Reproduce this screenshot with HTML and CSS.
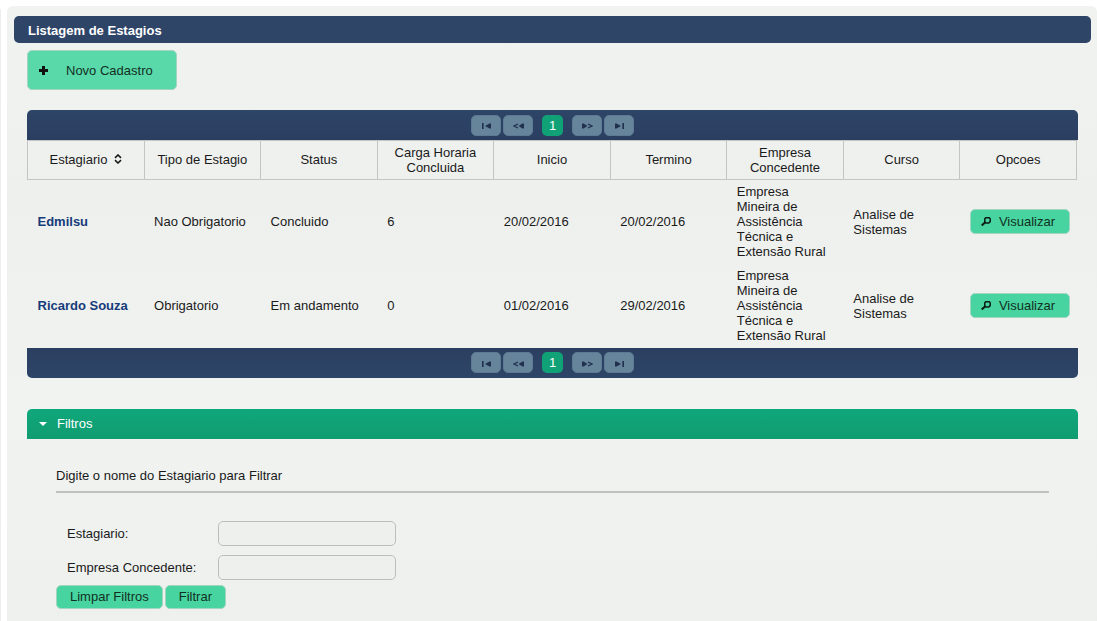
FILE: index.html
```
<!DOCTYPE html>
<html lang="pt-BR">
<head>
<meta charset="utf-8">
<title>Listagem de Estagios</title>
<link rel="stylesheet" href="styles.css">
</head>
<body>
<svg class="sprite" aria-hidden="true">
  <symbol id="i-first" viewBox="0 0 9 6"><path d="M0 0h1.600v6H0zM9 .5v5H7.500L3 3 7.500.5z"/></symbol>
  <symbol id="i-prev" viewBox="0 0 11 6"><path d="M11 .5v5H9.500L5.500 3l4-2.500z"/><path d="M5 1 1 3l4 2" fill="none" stroke="currentColor" stroke-width="1.300"/></symbol>
  <symbol id="i-next" viewBox="0 0 11 6"><path d="M0 .5v5h1.500l4-2.500-4-2.500z"/><path d="M6 1 10 3 6 5" fill="none" stroke="currentColor" stroke-width="1.300"/></symbol>
  <symbol id="i-last" viewBox="0 0 9 6"><path d="M7.400 0H9v6H7.400zM0 .5v5h1.500L6 3 1.500.5z"/></symbol>
  <symbol id="i-search" viewBox="0 0 10 9"><path d="M4.700.8h3.500l1 1v2.800L7.800 6H5L3.800 4.800V1.800z" fill="none" stroke="currentColor" stroke-width="1.500"/><path d="M4.300 5.300.7 8.500" stroke="currentColor" stroke-width="2"/></symbol>
</svg>
<div class="layout">
  <aside class="side"></aside>
  <main class="panel">
    <h1 class="panel-title">Listagem de Estagios</h1>
    <div class="content">
      <button class="btn btn-new" type="button">
        <svg class="ico-plus" viewBox="0 0 9 9"><path d="M3 0h3v3h3v3H6v3H3V6H0V3h3z"/></svg>
        <span>Novo Cadastro</span>
      </button>

      <section class="grid">
        <nav class="pager pager-top" aria-label="Paginas, topo">
          <button class="page-btn" type="button" aria-label="Primeira"><svg class="ico-s"><use href="#i-first"/></svg></button>
          <button class="page-btn" type="button" aria-label="Anterior"><svg class="ico-m"><use href="#i-prev"/></svg></button>
          <button class="page-num" type="button">1</button>
          <button class="page-btn" type="button" aria-label="Proxima"><svg class="ico-m"><use href="#i-next"/></svg></button>
          <button class="page-btn" type="button" aria-label="Ultima"><svg class="ico-s"><use href="#i-last"/></svg></button>
        </nav>
        <table class="table">
          <thead>
            <tr>
              <th>Estagiario <svg class="ico-sort" viewBox="0 0 8 10"><path d="M1 3.800 4 1l3 2.800M1 6.200 4 9l3-2.800" fill="none" stroke="currentColor" stroke-width="1.600"/></svg></th>
              <th>Tipo de Estagio</th>
              <th>Status</th>
              <th>Carga Horaria Concluida</th>
              <th>Inicio</th>
              <th>Termino</th>
              <th>Empresa Concedente</th>
              <th>Curso</th>
              <th>Opcoes</th>
            </tr>
          </thead>
          <tbody>
            <tr>
              <td class="name">Edmilsu</td>
              <td>Nao Obrigatorio</td>
              <td>Concluido</td>
              <td>6</td>
              <td>20/02/2016</td>
              <td>20/02/2016</td>
              <td>Empresa Mineira de Assistência Técnica e Extensão Rural</td>
              <td>Analise de Sistemas</td>
              <td><button class="btn btn-view" type="button"><svg class="ico-search"><use href="#i-search"/></svg><span>Visualizar</span></button></td>
            </tr>
            <tr>
              <td class="name">Ricardo Souza</td>
              <td>Obrigatorio</td>
              <td>Em andamento</td>
              <td>0</td>
              <td>01/02/2016</td>
              <td>29/02/2016</td>
              <td>Empresa Mineira de Assistência Técnica e Extensão Rural</td>
              <td>Analise de Sistemas</td>
              <td><button class="btn btn-view" type="button"><svg class="ico-search"><use href="#i-search"/></svg><span>Visualizar</span></button></td>
            </tr>
          </tbody>
        </table>
        <nav class="pager pager-bottom" aria-label="Paginas, rodape">
          <button class="page-btn" type="button" aria-label="Primeira"><svg class="ico-s"><use href="#i-first"/></svg></button>
          <button class="page-btn" type="button" aria-label="Anterior"><svg class="ico-m"><use href="#i-prev"/></svg></button>
          <button class="page-num" type="button">1</button>
          <button class="page-btn" type="button" aria-label="Proxima"><svg class="ico-m"><use href="#i-next"/></svg></button>
          <button class="page-btn" type="button" aria-label="Ultima"><svg class="ico-s"><use href="#i-last"/></svg></button>
        </nav>
      </section>

      <section class="filters">
        <h2 class="filters-title"><button class="filters-toggle" type="button" aria-expanded="true"><svg class="ico-caret" viewBox="0 0 8 4"><path d="M0 0h8L4 4z"/></svg>Filtros</button></h2>
        <form class="filters-body">
          <p class="hint">Digite o nome do Estagiario para Filtrar</p>
          <div class="fields">
            <label for="estagiario">Estagiario:</label>
            <input id="estagiario" class="text" type="text">
            <label for="empresa">Empresa Concedente:</label>
            <input id="empresa" class="text" type="text">
          </div>
          <div class="actions">
            <button class="btn btn-small" type="button">Limpar Filtros</button>
            <button class="btn btn-small" type="button">Filtrar</button>
          </div>
        </form>
      </section>
    </div>
  </main>
</div>
</body>
</html>
```
FILE: styles.css
```
* { box-sizing: border-box; }

body {
  margin: 0;
  background: #fff;
  color: #1a1a1a;
  font: 13px/15px "Liberation Sans", Arial, sans-serif;
}

button, input { font: inherit; color: inherit; }
button { margin: 0; padding: 0; border: 0; cursor: pointer; }
svg { display: block; fill: currentColor; flex: none; }
.sprite { display: none; }

.layout {
  display: flex;
  gap: 6px;
  min-height: 100vh;
  padding-top: 6px;
}

.side { width: 1px; margin-top: 3px; background: #eeeeee; }

.panel {
  flex: 1;
  padding: 10px 6px 12px 7px;
  border-radius: 6px 6px 0 0;
  background: linear-gradient(#f0f3f0, #eef0ee 30%, #f0f3f0 62%, #eef0ee);
}

.panel-title {
  margin: 0;
  padding: 7px 14px 5px;
  border-radius: 5px;
  background: #2e4568;
  color: #fff;
  font-size: 13px;
  line-height: 15px;
}

.content { padding: 7px 13px 0; }

.btn {
  border: 1px solid #a3d5bf;
  border-radius: 5px;
  background: #47d4a0;
  color: #12301f;
}

.btn-new {
  display: flex;
  align-items: center;
  gap: 18px;
  width: 150px;
  height: 40px;
  padding: 0 11px;
  background: #59d9aa;
}

.ico-plus { width: 9px; height: 9px; color: #111; }

.grid { margin-top: 20px; }

.pager {
  display: flex;
  justify-content: center;
  align-items: center;
  gap: 2px;
  height: 30px;
  background: linear-gradient(#2e4568, #2a3e60);
}

.pager-top { border-radius: 5px 5px 0 0; }
.pager-bottom { border-radius: 0 0 5px 5px; background: linear-gradient(#2b4061, #2e4568); }

.page-btn {
  display: flex;
  justify-content: center;
  align-items: center;
  width: 30px;
  height: 21px;
  padding-top: 2px;
  border: 1px solid #5c7a94;
  border-radius: 5px;
  background: #66859a;
  color: #20304d;
}

.page-num {
  width: 21px;
  height: 21px;
  margin: 0 7px;
  border-radius: 5px;
  background: #10a276;
  color: #fff;
}

.ico-s { width: 9px; height: 6px; }
.ico-m { width: 11px; height: 6px; }

.table {
  width: calc(100% - 1px);
  table-layout: fixed;
  border-collapse: collapse;
}

th {
  height: 39px;
  padding: 3px 10px 4px;
  border: 1px solid #c3c5c3;
  font-weight: normal;
}

td { height: 84px; padding: 4px 10px; }
.name { color: #163b7a; font-weight: bold; white-space: nowrap; }
.ico-sort { display: inline-block; width: 8px; height: 10px; margin-left: 3px; }

.btn-view {
  display: flex;
  align-items: center;
  gap: 8px;
  width: 100px;
  height: 25px;
  padding: 0 10px;
}

.ico-search { width: 10px; height: 9px; color: #0b1c14; }

.filters { margin-top: 31px; }

.filters-title { margin: 0; font: inherit; }

.filters-toggle {
  display: flex;
  align-items: center;
  gap: 10px;
  width: 100%;
  height: 30px;
  padding: 0 12px;
  border-radius: 5px 5px 0 0;
  background: linear-gradient(#10a77c, #109c70);
  color: #fff;
}

.ico-caret { width: 8px; height: 4px; }

.filters-body { padding: 29px; }

.hint {
  margin: 0;
  padding-bottom: 8px;
  border-bottom: 2px solid #bfc1bf;
}

.fields {
  display: grid;
  grid-template-columns: 151px 178px;
  row-gap: 9px;
  align-items: center;
  padding: 28px 11px 5px;
}

.text {
  width: 178px;
  height: 25px;
  padding: 0 6px;
  border: 1px solid #bcbebc;
  border-radius: 5px;
  background: #eef0ee;
}

.actions { display: flex; gap: 2px; }
.btn-small { height: 24px; padding: 0 13px; }
```
